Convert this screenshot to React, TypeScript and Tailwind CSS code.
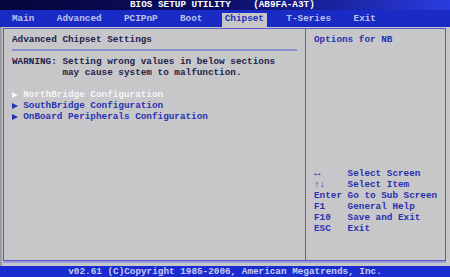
import React from "react";

const menu = ["Main", "Advanced", "PCIPnP", "Boot", "Chipset", "T-Series", "Exit"];

const help: [string, string][] = [
  ["↔", "Select Screen"],
  ["↑↓", "Select Item"],
  ["Enter", "Go to Sub Screen"],
  ["F1", "General Help"],
  ["F10", "Save and Exit"],
  ["ESC", "Exit"],
];

const items = [
  "NorthBridge Configuration",
  "SouthBridge Configuration",
  "OnBoard Peripherals Configuration",
];

function Arrow({ color }: { color: string }) {
  return (
    <span className="inline-flex w-[11.2px] items-center">
      <svg width="6" height="6" viewBox="0 0 6 6">
        <path d="M0 0 L6 3 L0 6 Z" fill={color} />
      </svg>
    </span>
  );
}

export default function App() {
  return (
    <div className="w-[450px] h-[277px] flex flex-col overflow-hidden bg-[#c7c7c9] font-['Liberation_Mono',monospace] font-bold text-[9.33px] leading-[11px] whitespace-pre">
      {/* title */}
      <div className="h-[10px] shrink-0 bg-gradient-to-r from-[#06063a] via-[#0c0e66] to-[#2a3ce0] text-white leading-[10px] pl-[130px]">
        BIOS SETUP UTILITY    (AB9FA-A3T)
      </div>

      {/* menu bar */}
      <div className="h-[17px] shrink-0 bg-[#1a2ac4] flex pl-[12px] gap-[22.4px] text-[#bcc4ec]">
        {menu.map((m) =>
          m === "Chipset" ? (
            <span key={m} className="mt-[3px] -mx-[3px] px-[3px] bg-[#c7c7c9] text-[#2030c0] flex items-center pb-[3px]">
              {m}
            </span>
          ) : (
            <span key={m} className="flex items-center">
              {m}
            </span>
          )
        )}
      </div>

      {/* body */}
      <div className="flex-1 flex pl-[3px] pr-[4px] pt-[1px] pb-[5px] bg-gradient-to-r from-[#8c8c98] from-[0px] via-[#c7c7c9] via-[3px] to-[#c7c7c9]">
        <div className="flex-1 flex border border-[#5a5ac8] shadow-[0_2px_0_#9a9ad8]">
          <div className="w-[301px] flex flex-col pl-[8px] pr-[8px] pt-[5px]">
            <div className="text-[#22224a]">Advanced Chipset Settings</div>
            <div className="h-[2px] mt-[4px] bg-[#8a90cc]" />
            <div className="mt-[5px] text-[#22224a]">
              {"WARNING: Setting wrong values in below sections\n         may cause system to malfunction."}
            </div>
            <div className="mt-[11px] flex flex-col">
              {items.map((it, i) => (
                <div key={it} className={"flex " + (i === 0 ? "text-[#f4f4f8]" : "text-[#2a32b4]")}>
                  <Arrow color={i === 0 ? "#f4f4f8" : "#2a32b4"} />
                  {it}
                </div>
              ))}
            </div>
          </div>
          <div className="flex-1 flex flex-col border-l border-[#5a5ac8] pl-[8px] pt-[5px] pb-[26px] text-[#2a30b0]">
            <div>Options for NB</div>
            <div className="mt-auto flex flex-col">
              {help.map(([k, d]) => (
                <div key={d} className="flex">
                  <span className="w-[33.6px]">
                    {k === "↔" ? <span className="text-[11px] leading-[11px]">↔</span> : k}
                  </span>
                  <span>{d}</span>
                </div>
              ))}
            </div>
          </div>
        </div>
      </div>

      {/* footer */}
      <div className="h-[11px] shrink-0 bg-[#1a2cd0] text-[#c8ccf0] text-center leading-[11px]">
        v02.61 (C)Copyright 1985-2006, American Megatrends, Inc.
      </div>
    </div>
  );
}
